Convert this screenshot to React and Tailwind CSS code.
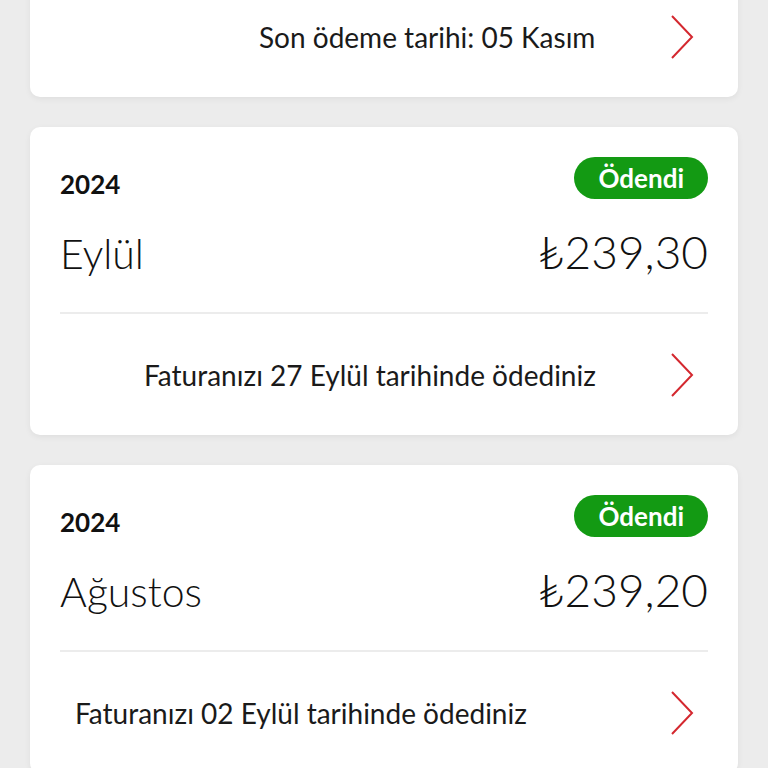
import React from 'react';

const bills = [
  { year: '2024', month: 'Eylül', amount: '239,30', paid: 'Faturanızı 27 Eylül tarihinde ödediniz', pad: 'pl-[114px]' },
  { year: '2024', month: 'Ağustos', amount: '239,20', paid: 'Faturanızı 02 Eylül tarihinde ödediniz', pad: 'pl-[45px]' },
];

function Chevron() {
  return (
    <svg width="24" height="44" viewBox="0 0 24 44" fill="none" className="shrink-0">
      <path d="M2 1 L22 22 L2 43" stroke="#d4282f" strokeWidth="2" strokeLinejoin="miter" />
    </svg>
  );
}

function FooterRow({ text, pad }) {
  return (
    <div className={`flex items-center h-[121px] pr-[44px] ${pad}`}>
      <span className="flex-1 text-[28px] text-[#1a1a1a] leading-none">{text}</span>
      <Chevron />
    </div>
  );
}

export default function App() {
  return (
    <div className="w-[768px] h-[768px] overflow-hidden bg-[#ececec]" style={{ fontFamily: 'Lato, "Open Sans", sans-serif' }}>
      <div className="px-[30px] flex flex-col gap-[30px]">
        {/* card cut off at the top */}
        <div className="-mt-[24px] bg-white rounded-b-[10px] shadow-[0_2px_6px_rgba(0,0,0,0.06)]">
          <FooterRow text="Son ödeme tarihi: 05 Kasım" pad="pl-[229px]" />
        </div>

        {bills.map((b) => (
          <div key={b.month} className="bg-white rounded-[10px] shadow-[0_2px_6px_rgba(0,0,0,0.06)]">
            <div className="px-[30px] pt-[30px]">
              <div className="flex justify-between items-start">
                <span className="mt-[14px] text-[26px] font-bold text-[#111] leading-none">{b.year}</span>
                <span className="h-[42px] px-[24px] rounded-full bg-[#139a13] text-white text-[26px] font-bold flex items-center leading-none">
                  Ödendi
                </span>
              </div>
              <div className="flex justify-between items-baseline mt-[30px] h-[52px]">
                <span className="text-[41px] font-light text-[#111] leading-none">{b.month}</span>
                <span className="text-[46px] font-light text-[#111] leading-none">₺{b.amount}</span>
              </div>
              <div className="mt-[31px] h-[2px] bg-[#ececec]" />
            </div>
            <FooterRow text={b.paid} pad={b.pad} />
          </div>
        ))}
      </div>
    </div>
  );
}
